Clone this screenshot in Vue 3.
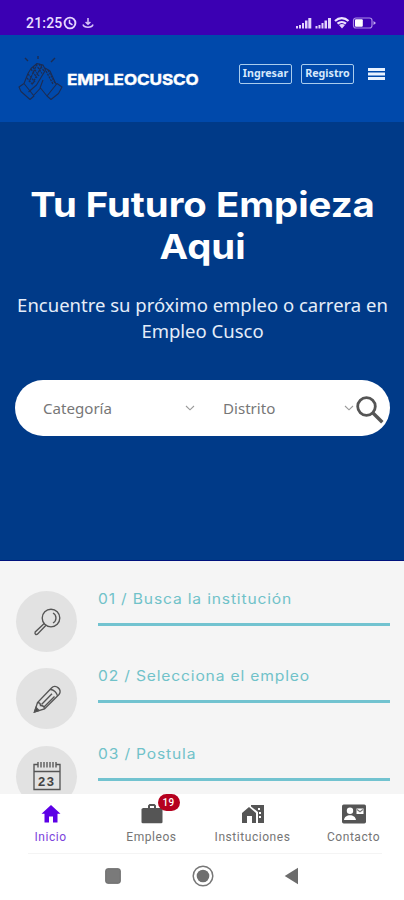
<script setup>
const steps = [
  { title: '01 / Busca la institución', icon: 'lens' },
  { title: '02 / Selecciona el empleo', icon: 'pencil' },
  { title: '03 / Postula', icon: 'calendar' },
]
const tabs = [
  { label: 'Inicio', icon: 'home', active: true },
  { label: 'Empleos', icon: 'bag', badge: 19 },
  { label: 'Instituciones', icon: 'building' },
  { label: 'Contacto', icon: 'contact' },
]
</script>

<template>
  <div class="screen">
    <div class="status">
      <span class="time">21:25</span>
      <svg class="clock" width="14" height="14" viewBox="0 0 14 14" fill="none" stroke="#e5d5ff" stroke-width="1.9"><circle cx="7" cy="7" r="5.4" /><path d="M6.500 3.800V7l3 1.800" stroke-width="1.500" /></svg>
      <svg class="anchor" width="12" height="12" viewBox="0 0 12 12" fill="none" stroke="#d9c5fa" stroke-width="1.500"><path d="M6 1v6M3.600 5L6 7.300 8.400 5M1 7.500c1 3.600 9 3.600 10 0" /></svg>
      <svg class="signals" width="82" height="14" viewBox="0 0 82 14" fill="#e2d2fc">
        <path d="M0 10h2v2.500H0zM3 9h2v3.500H3zM6 7h2v5.500H6zM9 4.500h2.500v8H9zM12.300 2h3v10.500h-3zM19.500 10h2v2.500h-2zM22.500 9h2v3.500h-2zM25.500 7h2v5.500h-2zM28.500 4.500h2.500v8h-2.500zM32 2h3v10.500h-3z" />
        <g fill="none" stroke="#eee4ff" stroke-width="2.200"><path d="M39 5c4-3.800 9.500-3.800 13.500 0M41.500 7.700c2.500-2.200 6-2.200 8.500 0" /></g>
        <path d="M43 9c2-1.500 4-1.500 6 0l-3 3.500z" />
        <rect x="57.500" y="2" width="18.500" height="10" rx="2.500" fill="none" stroke="#a98be6" stroke-width="1.200" />
        <rect x="59" y="3.300" width="7.800" height="7.400" rx="1" fill="#fff" /><path d="M77.500 5l2.500 2-2.500 2z" fill="#c8b1f2" />
      </svg>
    </div>

    <header class="top">
      <svg class="logo" width="45" height="46" viewBox="0 0 45 46" fill="none" stroke="#1c2c52" stroke-linejoin="round">
        <path stroke-width="1.100" d="M1 31l5-3.500L16 40l-4 3.500L3 35.500zM6 27.500l4-10 3-5 6-5 6 1.500 2.500 5-9 15-8 7M27 12l5 3 5 11 1.500 3M44 31l-5-3.500L29 40l4 3.500 7.500-6zM16 39l6.500-7 6.500 8M22 32l3-8" />
        <path stroke-width="1.300" stroke-dasharray="2.200 .9" d="M13 13l6 9M15 11l6 9M18 8.500l6 9M21 8l5 7M10 18l7 8M9 22l6 7M19 8l-8 18M24 9l-10 20M28 15l7 13M30 14l7 13" />
        <path stroke-width="1.400" d="M7 2l3 3M20 0v3M37 2l-4 4" />
      </svg>
      <strong class="brand">EMPLEOCUSCO</strong>
      <a class="button">Ingresar</a>
      <a class="button register">Registro</a>
      <svg class="menu" width="17" height="14" viewBox="0 0 17 14"><path d="M0 2.500h17M0 7h17M0 11.500h17" stroke="#e8f2ff" stroke-width="3.100" /></svg>
    </header>

    <main class="hero">
      <h1><span class="line-one">Tu Futuro Empieza</span><br><span class="line-two">Aqui</span></h1>
      <p>Encuentre su próximo empleo o carrera en Empleo Cusco</p>
      <div class="search">
        <div class="select category"><span>Categoría</span><svg width="10" height="6" viewBox="0 0 10 6"><path d="M1 1l4 3.800L9 1" /></svg></div>
        <div class="select district"><span>Distrito</span><svg width="10" height="6" viewBox="0 0 10 6"><path d="M1 1l4 3.800L9 1" /></svg></div>
        <svg class="find" width="28" height="28" viewBox="0 0 28 28" fill="none" stroke="#555"><circle cx="10.500" cy="10.500" r="8.800" stroke-width="2.800" /><path d="M17 17l9.300 9.300" stroke-width="3.400" /></svg>
      </div>
    </main>

    <section class="steps">
      <div v-for="step in steps" :key="step.icon" class="step">
        <div class="disc">
          <svg v-if="step.icon === 'lens'" width="30" height="30" viewBox="0 0 30 30"><circle cx="19" cy="11" r="8.800" /><path d="M21 6a5.700 5.700 0 0 1 0 10M12.200 16.500l-9 8.500c-.8 2 .8 3 2.200 2.200L14 18.200" /></svg>
          <svg v-else-if="step.icon === 'pencil'" width="30" height="30" viewBox="0 0 30 30"><path d="M2.500 28l3-9.500L19.500 4c4-4.500 11.500 2 7.500 6.500L12.500 25zM5.500 18.500c3 0 3 2 3 3 2 0 4 1 4 3.500M18.500 5.500c3 0 6.500 3 7 6.500M9.500 20.500L20 9.800M12 23L22.500 12.500" /><path d="M2.500 28l1.500-4.500 3 3z" fill="#444" /></svg>
          <svg v-else width="30" height="32" viewBox="0 0 30 32"><path d="M6 4.500H2v25h26v-25h-4M2 11.500h26M6 2v5.500M9 2v5.500M12 2v5.500M15 2v5.500M18 2v5.500M21 2v5.500M24 2v5.500" /><text x="6" y="25.700">23</text></svg>
        </div>
        <div class="step-title"><span>{{ step.title }}</span></div>
      </div>
    </section>

    <nav class="tabs">
      <div v-for="tab in tabs" :key="tab.icon" class="tab" :class="{ active: tab.active }">
        <div class="tab-icon">
          <svg v-if="tab.icon === 'home'" width="20" height="20" viewBox="0 0 20 20"><path d="M10 1L.5 9.700h3V18.500H8v-6h4v6h4.500V9.700h3z" /></svg>
          <svg v-else-if="tab.icon === 'bag'" width="22" height="22" viewBox="0 0 22 22"><path d="M7 5V2.500L8.500 1h5L15 2.500V5h5l1.500 1v13.500l-1 .8h-19l-1-.8V6L2 5zm2 0h4V3H9z" fill-rule="evenodd" /></svg>
          <svg v-else-if="tab.icon === 'building'" width="24" height="20" viewBox="0 0 24 20"><path d="M1 9l7-6 7 6v10h-4v-7H6v7H1zM10 1h13v18h-6V8L10 2.500z" /><path d="M17 4h2v2h-2zM20 8h-2v2h2zM20 12h-2v2h2z" fill="#fff" /></svg>
          <svg v-else width="26" height="20" viewBox="0 0 26 20"><rect x="1" y="0.500" width="24" height="19" rx="1.700" /><circle cx="9" cy="6.700" r="3.200" fill="#fff" /><path d="M3 16c.5-6.400 11.500-6.400 12 0zM15.500 4.500h7V10h-7z" fill="#fff" /><path d="M16 5.500l3 2.200 3-2.200" fill="none" stroke="#777" stroke-width="1.200" /></svg>
          <span v-if="tab.badge" class="badge">{{ tab.badge }}</span>
        </div>
        <span class="tab-label" :class="tab.icon">{{ tab.label }}</span>
      </div>
    </nav>
    <footer class="system">
      <svg width="16" height="16" viewBox="0 0 16 16"><rect x=".7" y=".7" width="14.600" height="14.600" rx="2" fill="#7a7a7a" stroke="#686868" /></svg>
      <svg width="22" height="22" viewBox="0 0 22 22"><circle cx="11" cy="11" r="9.800" fill="none" stroke="#777" stroke-width="1.500" /><circle cx="11" cy="11" r="6.300" fill="#6f6f6f" /></svg>
      <svg width="15" height="18" viewBox="0 0 15 18"><path d="M14 .8v16.400L.7 9z" fill="#6c6c6c" /></svg>
    </footer>
  </div>
</template>

<style>
body { margin: 0; overflow: hidden; }
</style>
<style scoped>
* { box-sizing: border-box; }
.screen { width: 404px; height: 900px; overflow: hidden; display: flex; flex-direction: column; background: #fff; font-family: "Noto Sans", sans-serif; }
svg { display: block; flex: none; }
.status { height: 35px; flex: none; background: #3b00b3; display: flex; align-items: center; padding: 10px 26px 0 26px; }
.time { font: 500 14px/16px Roboto, sans-serif; letter-spacing: .2px; color: #eadfff; width: 37px; }
.anchor { margin-left: 5px; }
.signals { margin-left: auto; }
.top { height: 87px; flex: none; background: #0049ab; display: flex; align-items: flex-start; padding: 21px 19px 0 18px; }
.brand { margin: 15px 0 0 4px; width: 172px; font: 700 15px/18px Inter, sans-serif; letter-spacing: -.1px; color: #fff; -webkit-text-stroke: .4px #fff; transform: scaleX(1.14); transform-origin: left; }
.button { margin-top: 8px; width: 53px; height: 20px; border: 1px solid #a9cced; border-radius: 2px; color: #d6e8fc; font: 700 10.700px/17px "Noto Sans", sans-serif; text-align: center; flex: none; }
.register { margin-left: 9px; }
.menu { margin: 11px 0 0 auto; }
.hero { height: 439px; flex: none; background: #003a88; border-bottom: 1px solid #00127d; padding: 62px 14px 0 15px; text-align: center; color: #fff; }
h1 { margin: 0; white-space: nowrap; font: 700 34.500px/42px Inter, sans-serif; transform: scaleX(1.11); }
.hero p { margin: 24px -5px 0; padding: 0 5px; color: #e5edf9; font-size: 18.500px; line-height: 26px; }
.search { margin-top: 36px; height: 56px; border-radius: 28px; background: #fff; display: flex; align-items: center; padding-right: 6px; }
.select { display: flex; align-items: center; justify-content: space-between; font-size: 15.100px; color: #777; }
.select svg { fill: none; stroke: #999; stroke-width: 1.100; }
.category { width: 180px; padding-left: 28px; }
.district { width: 145px; padding-left: 14px; margin-left: 14px; }
.find { margin: 3px 0 0 auto; }
.steps { height: 233px; flex: none; overflow: hidden; background: #f5f5f5; padding: 30px 14px 0 16px; }
.step { height: 77.300px; display: flex; gap: 21px; }
.disc { width: 61px; height: 61px; flex: none; border-radius: 50%; background: #e2e2e2; display: grid; place-items: center; }
.disc svg { fill: none; stroke: #555; stroke-width: 1.350; }
.disc text { font: 600 13px "Liberation Sans", sans-serif; fill: #444; stroke: none; letter-spacing: 1.500px; }
.step-title { width: 292px; height: 35px; border-bottom: 3px solid #72c3d0; color: #70c2c9; font: 400 14px/16px Inter, sans-serif; letter-spacing: .75px; }
.step-title span { display: inline-block; transform: scaleX(1.115); transform-origin: left; white-space: nowrap; }
.tabs { height: 60px; flex: none; background: #fff; display: grid; grid-template-columns: repeat(4, 101px); }
.tab { display: flex; flex-direction: column; align-items: center; color: #757575; padding-top: 10px; }
.tab-icon { position: relative; height: 20px; display: flex; align-items: center; }
.tab-icon svg { fill: #555; }
.tab.active { color: #7c42dc; }
.tab.active .tab-icon svg { fill: #5c00e6; }
.tab-label { margin-top: 5px; font: 400 12px/16px Roboto, sans-serif; letter-spacing: .55px; }
.badge { position: absolute; left: 17px; top: -10px; width: 22px; height: 17px; border-radius: 9px; background: #b5001e; color: #fff; font: 500 10px/17px Roboto, sans-serif; text-align: center; letter-spacing: .4px; }
.system { height: 46px; border-top: 1px solid #f4f4f4; margin: -1px 22px 0 28px; display: flex; align-items: center; padding: 0 83px 1px 77px; justify-content: space-between; flex: none; }
</style>
